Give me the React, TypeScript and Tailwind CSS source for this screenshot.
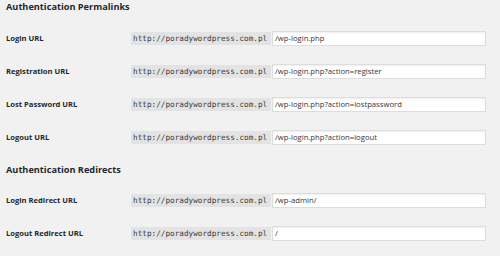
import React from "react";

const HOST = "http://poradywordpress.com.pl";

function Row({ label, value }: { label: string; value: string }) {
  return (
    <div className="flex h-[33px] items-center">
      <div className="w-[125px] shrink-0 font-['Open_Sans','Noto_Sans',sans-serif] text-[7.6px] font-bold text-[#23282d]">
        {label}
      </div>
      <code className="flex h-[13px] w-[140px] shrink-0 items-center bg-[#e3e3e3] px-[2px] font-['DejaVu_Sans_Mono',monospace] text-[7.7px] text-[#3c3c3c]">
        {HOST}
      </code>
      <div className="ml-[1px] flex h-[15px] w-[214px] shrink-0 items-center border border-[#dddddd] bg-white px-[2px] font-['Open_Sans','Noto_Sans',sans-serif] text-[7.7px] text-[#32373c] shadow-[inset_0_1px_2px_rgba(0,0,0,0.07)]">
        {value}
      </div>
    </div>
  );
}

function Heading({ children }: { children: React.ReactNode }) {
  return (
    <h2 className="h-[13px] font-['Open_Sans','Noto_Sans',sans-serif] text-[9.2px] leading-[13px] font-bold text-[#23282d]">
      {children}
    </h2>
  );
}

export default function App() {
  return (
    <div className="h-[256px] w-[500px] overflow-hidden bg-[#f1f1f1] pl-[6px]">
      <div className="mb-[9px]">
        <Heading>Authentication Permalinks</Heading>
      </div>
      <Row label="Login URL" value="/wp-login.php" />
      <Row label="Registration URL" value="/wp-login.php?action=register" />
      <Row label="Lost Password URL" value="/wp-login.php?action=lostpassword" />
      <Row label="Logout URL" value="/wp-login.php?action=logout" />
      <div className="flex h-[30px] items-start pt-[8.5px]">
        <Heading>Authentication Redirects</Heading>
      </div>
      <Row label="Login Redirect URL" value="/wp-admin/" />
      <Row label="Logout Redirect URL" value="/" />
    </div>
  );
}
